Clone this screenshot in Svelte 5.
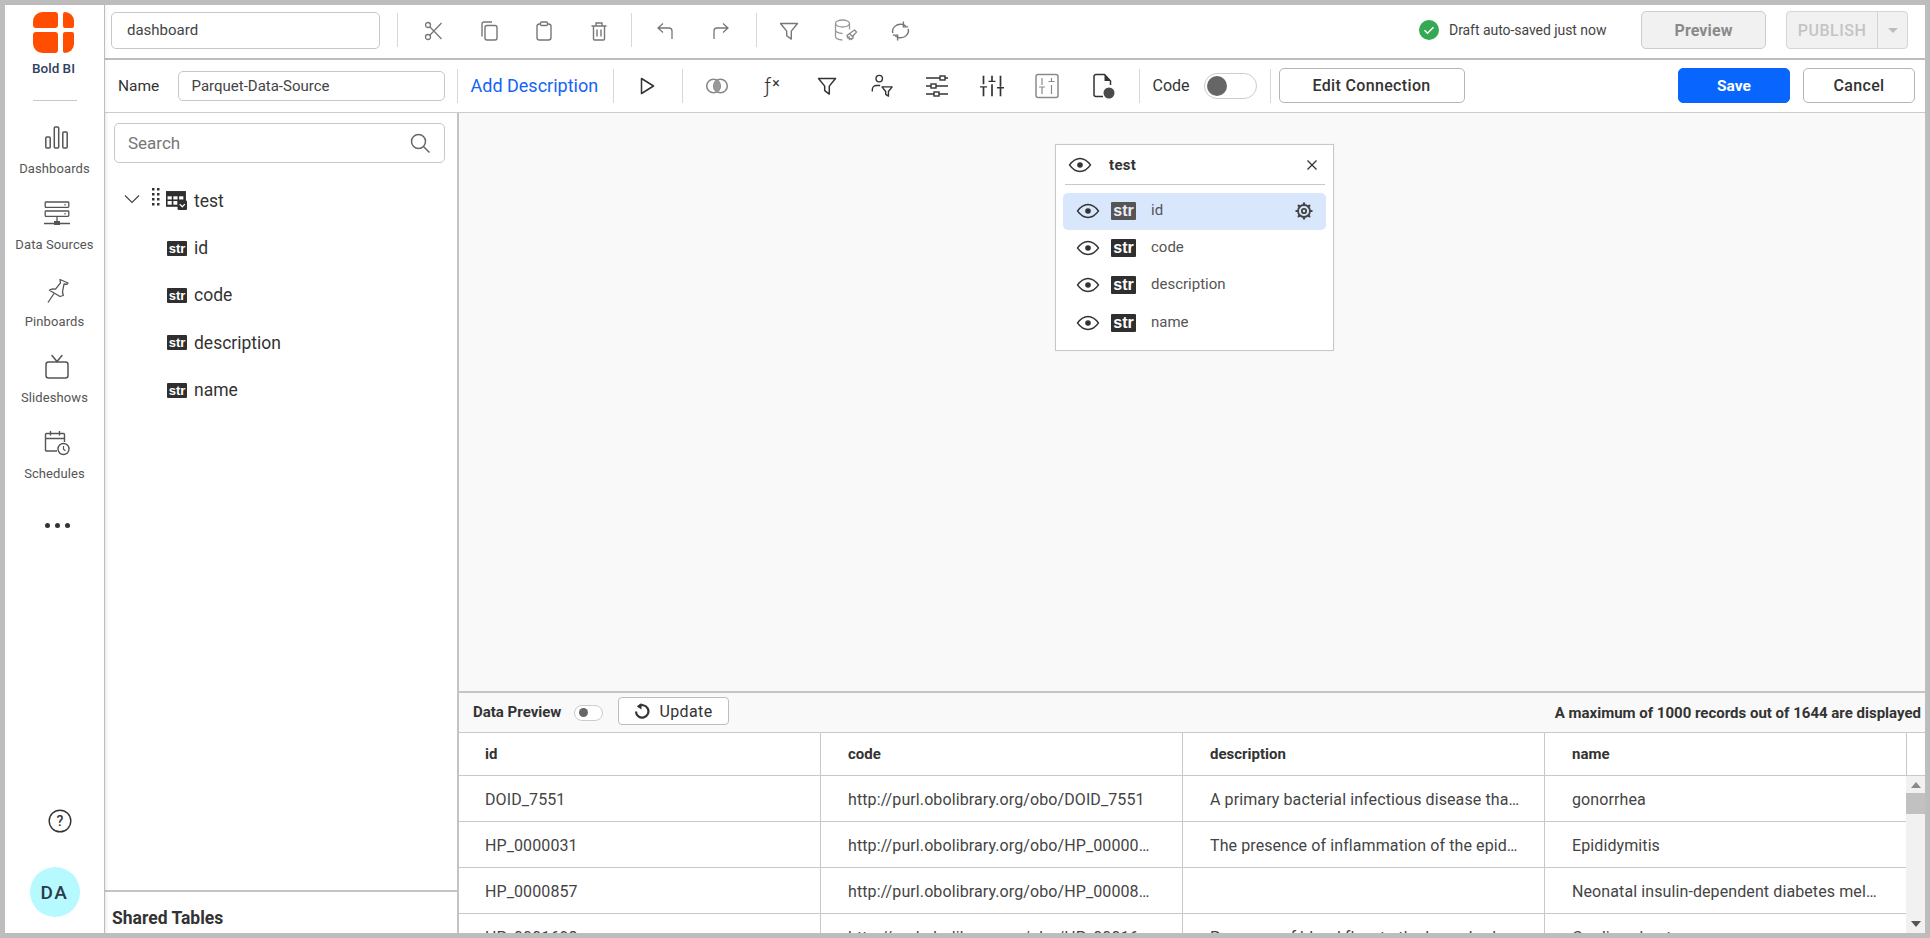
<script>
  const nav = [
    { label: 'Dashboards', icon: 'bars' },
    { label: 'Data Sources', icon: 'server' },
    { label: 'Pinboards', icon: 'pin' },
    { label: 'Slideshows', icon: 'tv' },
    { label: 'Schedules', icon: 'cal' }
  ];
  const fields = ['id', 'code', 'description', 'name'];
  const rows = [
    ['DOID_7551', 'http://purl.obolibrary.org/obo/DOID_7551', 'A primary bacterial infectious disease that is sexually transmitted', 'gonorrhea'],
    ['HP_0000031', 'http://purl.obolibrary.org/obo/HP_0000031', 'The presence of inflammation of the epididymis', 'Epididymitis'],
    ['HP_0000857', 'http://purl.obolibrary.org/obo/HP_0000857', '', 'Neonatal insulin-dependent diabetes mellitus'],
    ['HP_0001698', 'http://purl.obolibrary.org/obo/HP_0001698', 'Presence of blood flow to the lower body and organs', 'Cardiac shunt']
  ];
</script>

{#snippet eye()}
  <svg class="eye" width="24" height="16" viewBox="0 0 24 16"><path d="M1.5 8C5 3.3 8.3 1.5 12 1.5S19 3.3 22.5 8C19 12.7 15.7 14.5 12 14.5S5 12.7 1.5 8Z" fill="none" stroke="#333" stroke-width="1.3"/><circle cx="12" cy="8" r="2.8" fill="#333"/></svg>
{/snippet}

{#snippet filter(color, sw)}
  <svg width="22" height="22" viewBox="0 0 22 22"><path d="M2.5 3.5h17l-6.2 7.6v8l-4.6-3.4v-4.6z" fill="none" stroke={color} stroke-width={sw} stroke-linejoin="round"/></svg>
{/snippet}

<div class="page">
  <aside class="side">
    <div class="brand">
      <svg width="41" height="41" viewBox="0 0 41 41" fill="#ff4e02">
        <path d="M9.5 0H22a3 3 0 0 1 3 3v10a3 3 0 0 1-3 3H3a3 3 0 0 1-3-3V9.5A9.5 9.5 0 0 1 9.5 0Z"/>
        <path d="M32 0a9 9 0 0 1 9 9v5a2 2 0 0 1-2 2h-7a2 2 0 0 1-2-2V2a2 2 0 0 1 2-2Z"/>
        <path d="M3 20h19a3 3 0 0 1 3 3v15a3 3 0 0 1-3 3H9.5A9.5 9.5 0 0 1 0 31.5V23a3 3 0 0 1 3-3Z"/>
        <path d="M32 20h7a2 2 0 0 1 2 2v10a9 9 0 0 1-9 9 2 2 0 0 1-2-2V22a2 2 0 0 1 2-2Z"/>
      </svg>
      <span class="brand-name">Bold BI</span>
    </div>
    <div class="side-rule"></div>
    <nav class="nav">
      {#each nav as n}
        <div class="nav-item">
          <span class="nav-icon">
            {#if n.icon === 'bars'}
              <svg width="26" height="26" viewBox="0 0 26 26" fill="none" stroke="#555" stroke-width="1.5"><rect x="1.8" y="12" width="4.4" height="11" rx="1"/><rect x="10.3" y="2" width="4.4" height="21" rx="1"/><rect x="18.8" y="7" width="4.4" height="16" rx="1"/></svg>
            {:else if n.icon === 'server'}
              <svg width="26" height="26" viewBox="0 0 26 26" fill="none" stroke="#555" stroke-width="1.3"><rect x="1.2" y="1" width="23.6" height="5.4" rx=".8"/><rect x="1.2" y="10" width="23.6" height="5.4" rx=".8"/><path d="M13 15.5V21M0 22.5h26" /><rect x="10" y="20" width="6" height="4" fill="#555" stroke="none"/><circle cx="21" cy="3.7" r=".8" fill="#555" stroke="none"/><circle cx="21" cy="12.7" r=".8" fill="#555" stroke="none"/></svg>
            {:else if n.icon === 'pin'}
              <svg width="26" height="26" viewBox="0 0 26 26" fill="none" stroke="#555" stroke-width="1.3" stroke-linejoin="round"><path d="M16 1.5 24 5l-1.2 1.3-2.8-.3-1.5 8 .8 3.5L16 18.5 5.5 12.2 8 11l3.5.2 5-6.4z"/><path d="m10 15.5-6 9"/></svg>
            {:else if n.icon === 'tv'}
              <svg width="26" height="26" viewBox="0 0 26 26" fill="none" stroke="#555" stroke-width="1.5"><rect x="2" y="8" width="22" height="16" rx="2.5"/><path d="m8 1.5 5 6 5-6" stroke-linecap="round"/></svg>
            {:else}
              <svg width="26" height="26" viewBox="0 0 26 26" fill="none" stroke="#555" stroke-width="1.4"><path d="M13 21H2.5a1 1 0 0 1-1-1V4.5a1 1 0 0 1 1-1h17a1 1 0 0 1 1 1V12M1.5 8.5h19M6.5 1v4.5M15.5 1v4.5"/><circle cx="19.5" cy="19" r="5.5"/><path d="M19.5 16v3.2l2 1.5" stroke-width="1.2"/></svg>
            {/if}
          </span>
          <span class="nav-label">{n.label}</span>
        </div>
      {/each}
      <div class="more"><i></i><i></i><i></i></div>
    </nav>
    <div class="side-foot">
      <svg class="help" width="24" height="24" viewBox="0 0 24 24"><circle cx="12" cy="12" r="10.8" fill="none" stroke="#333" stroke-width="1.4"/><text x="12" y="17" text-anchor="middle" font-family="Roboto, sans-serif" font-size="14" font-weight="500" fill="#333">?</text></svg>
      <div class="avatar">DA</div>
    </div>
  </aside>

  <div class="main">
    <header class="topbar">
      <div class="fake-input dash">dashboard</div>
      <span class="sep s1"></span>
      <span class="tool t1"><svg width="20" height="20" viewBox="0 0 20 20" fill="none" stroke="#777" stroke-width="1.3"><circle cx="4" cy="4" r="2.5"/><circle cx="4" cy="16" r="2.5"/><path d="M5.8 5.8 17.5 18M5.8 14.2 17.5 2"/></svg></span>
      <span class="tool"><svg width="20" height="20" viewBox="0 0 20 20" fill="none" stroke="#777" stroke-width="1.4"><rect x="6" y="4.5" width="12" height="14.5" rx="2"/><path d="M3 15.5V3A2 2 0 0 1 5 1h8"/></svg></span>
      <span class="tool"><svg width="20" height="20" viewBox="0 0 20 20" fill="none" stroke="#777" stroke-width="1.4"><rect x="3" y="3" width="14" height="16" rx="2.5"/><rect x="6.5" y="1" width="7" height="3.5" rx="1" fill="#fff"/></svg></span>
      <span class="tool"><svg width="20" height="20" viewBox="0 0 20 20" fill="none" stroke="#777" stroke-width="1.4"><path d="M2.5 5h15M7 5V2h6v3M4.5 5v13a1 1 0 0 0 1 1h9a1 1 0 0 0 1-1V5M8 8.5v7M12 8.5v7"/></svg></span>
      <span class="sep s2"></span>
      <span class="tool t2"><svg width="22" height="22" viewBox="0 0 22 22" fill="none" stroke="#777" stroke-width="1.3"><path d="M8 3.5 3 8l5 4.5M3 8h11a3 3 0 0 1 3 3v8"/></svg></span>
      <span class="tool t3"><svg width="22" height="22" viewBox="0 0 22 22" fill="none" stroke="#777" stroke-width="1.3"><path d="M14 3.5 19 8l-5 4.5M19 8H8a3 3 0 0 0-3 3v8"/></svg></span>
      <span class="sep s3"></span>
      <span class="tool t4">{@render filter('#777', 1.4)}</span>
      <span class="tool t5"><svg width="26" height="26" viewBox="0 0 26 26" fill="none" stroke="#999" stroke-width="1.3"><ellipse cx="9.5" cy="5.5" rx="7" ry="3.5"/><path d="M2.5 5.5v13c0 1.8 3 3.5 7 3.5M16.5 5.5v6M2.5 12c0 1.8 3 3.5 7 3.5"/><path d="m21.5 12 2 2-4 4.5-3-3zM16.5 15.5l-2.5 2 1 2.5 1-1 .5 2.5 1.5-1 .5 1 1.5-1.5 0-3" stroke="#888"/></svg></span>
      <span class="tool"><svg width="25" height="22" viewBox="0 0 26 26" preserveAspectRatio="none" fill="none" stroke="#777" stroke-width="1.5"><path d="M5 15.5C3.5 9.5 9 3.8 15 5.3c1.500.4 2.800 1.200 3.700 2.300"/><path d="M16 1.800v6.400h5"/><path d="M21 10.500c1.500 6-4 11.700-10 10.200-1.500-.4-2.800-1.200-3.700-2.300"/><path d="M10 24.200v-6.400H5"/></svg></span>
      <div class="grow"></div>
      <svg class="ok" width="20" height="20" viewBox="0 0 20 20"><circle cx="10" cy="10" r="10" fill="#34a853"/><path d="m5.5 10.3 3 3 6-6" fill="none" stroke="#fff" stroke-width="1.5"/></svg>
      <span class="draft">Draft auto-saved just now</span>
      <div class="btn-preview">Preview</div>
      <div class="btn-publish"><span class="pub-text">PUBLISH</span><span class="pub-caret"><i></i></span></div>
    </header>

    <div class="toolbar">
      <span class="name-label">Name</span>
      <div class="fake-input ds">Parquet-Data-Source</div>
      <span class="sep2 a"></span>
      <span class="add">Add Description</span>
      <span class="sep2 b"></span>
      <span class="tb run"><svg width="22" height="22" viewBox="0 0 22 22"><path d="M5.5 3.5 17.5 11 5.5 18.5z" fill="none" stroke="#333" stroke-width="1.5" stroke-linejoin="round"/></svg></span>
      <span class="sep2 c"></span>
      <span class="tb join"><svg width="24" height="16" viewBox="0 0 24 16"><circle cx="8.5" cy="8" r="6.8" fill="none" stroke="#888" stroke-width="1.6"/><circle cx="15.5" cy="8" r="6.8" fill="none" stroke="#888" stroke-width="1.6"/><path d="M12 2.2a6.8 6.8 0 0 1 0 11.6 6.8 6.8 0 0 1 0-11.6z" fill="#999"/></svg></span>
      <span class="tb fx"><span class="fx-f">ƒ</span><span class="fx-x">×</span></span>
      <span class="tb">{@render filter('#333', 1.5)}</span>
      <span class="tb"><svg width="24" height="24" viewBox="0 0 26 26" fill="none" stroke="#333" stroke-width="1.5"><circle cx="10" cy="5" r="3.5"/><path d="M2.5 19v-2a4.5 4.5 0 0 1 4.5-4.5h4"/><path d="M13 14h11l-4 5v5l-3-2v-3z" stroke-linejoin="round"/></svg></span>
      <span class="tb"><svg width="26" height="24" viewBox="0 0 26 24" fill="none" stroke="#333" stroke-width="1.4"><path d="M2 4h14M21 4h3M2 12h5M12 12h12M2 20h8M15 20h9"/><rect x="16" y="2" width="5" height="4"/><rect x="7" y="10" width="5" height="4"/><rect x="10" y="18" width="5" height="4"/></svg></span>
      <span class="tb"><svg width="26" height="22" viewBox="0 0 26 26" preserveAspectRatio="none" fill="none" stroke="#333" stroke-width="1.7"><path d="M4.5 1v10M1 14h7M4.5 14v11M13 1v6M9.5 7.5h7M13 11v14M21.5 1v13M18 15h7M21.5 15v10"/></svg></span>
      <span class="tb"><svg width="24" height="26" viewBox="0 0 24 26" fill="none" stroke="#8a8a8a" stroke-width="1.5"><rect x="1" y="1.5" width="22" height="23" rx="2"/><path d="M7 5v7M4 14h6M7 14v7M16.5 5v3M13.5 8.5h6M16.5 12v9" stroke-width="1.2"/></svg></span>
      <span class="tb doc"><svg width="24" height="28" viewBox="0 0 24 28"><path d="M12 24.5H5a2 2 0 0 1-2-2v-18a2 2 0 0 1 2-2h8.5l6 6.5v4" fill="none" stroke="#333" stroke-width="1.5"/><path d="M13.5 2.5v6.5h6z" fill="#333"/><circle cx="18" cy="21" r="5.5" fill="#4a4a4a"/></svg></span>
      <span class="sep2 d"></span>
      <span class="code-label">Code</span>
      <span class="toggle big"><i></i></span>
      <span class="sep2 e"></span>
      <div class="btn edit">Edit Connection</div>
      <div class="grow"></div>
      <div class="btn save">Save</div>
      <div class="btn cancel">Cancel</div>
    </div>

    <div class="workspace">
      <section class="left">
        <div class="left-top">
          <div class="search">
            <span>Search</span>
            <svg width="22" height="22" viewBox="0 0 22 22" fill="none" stroke="#666" stroke-width="1.5"><circle cx="9.5" cy="9.5" r="7"/><path d="m14.7 14.7 5.8 5.8"/></svg>
          </div>
          <div class="tree">
            <div class="tree-row head">
              <svg class="chev" width="16" height="10" viewBox="0 0 16 10"><path d="M1 1.5 8 8.5l7-7" fill="none" stroke="#444" stroke-width="1.2"/></svg>
              <svg class="drag" width="8" height="18" viewBox="0 0 8 18" fill="#333"><rect x="0" y="0" width="2.5" height="2.5"/><rect x="5" y="0" width="2.5" height="2.5"/><rect x="0" y="5" width="2.5" height="2.5"/><rect x="5" y="5" width="2.5" height="2.5"/><rect x="0" y="10" width="2.5" height="2.5"/><rect x="5" y="10" width="2.5" height="2.5"/><rect x="0" y="15" width="2.5" height="2.5"/><rect x="5" y="15" width="2.5" height="2.5"/></svg>
              <svg class="tbl" width="21" height="19" viewBox="0 0 20 18"><rect width="19" height="15" fill="#2f2f2f"/><g fill="#fff"><rect x="1.5" y="5" width="4" height="3"/><rect x="7" y="5" width="4" height="3"/><rect x="12.5" y="5" width="4" height="3"/><rect x="1.5" y="9.5" width="4" height="3.5"/><rect x="7" y="9.5" width="4" height="3.5"/></g><rect x="11" y="9" width="9" height="9" rx="1" fill="#2f2f2f"/><path d="m13 12.5 2.5 2.5 2.5-2.5" fill="none" stroke="#fff" stroke-width="1.2"/></svg>
              <span>test</span>
            </div>
            {#each fields as f}
              <div class="tree-row leaf"><span class="str small">str</span><span>{f}</span></div>
            {/each}
          </div>
        </div>
        <div class="shared">Shared Tables</div>
      </section>

      <section class="right">
        <div class="canvas">
          <div class="card">
            <div class="card-head">
              {@render eye()}
              <span class="card-title">test</span>
              <svg width="12" height="12" viewBox="0 0 12 12"><path d="m1.5 1.5 9 9m0-9-9 9" stroke="#333" stroke-width="1.3"/></svg>
            </div>
            <div class="card-rows">
              {#each fields as f, i}
                <div class="card-row" class:sel={i === 0}>
                  {@render eye()}
                  <span class="str big">str</span>
                  <span class="card-name">{f}</span>
                  {#if i === 0}
                    <svg class="gear" width="20" height="20" viewBox="0 0 20 20" fill="none" stroke="#444"><circle cx="10" cy="10" r="6" stroke-width="1.8"/><circle cx="10" cy="10" r="2.2" stroke-width="1.8"/><path d="M10 1.5v2.5M10 16v2.5M1.5 10H4M16 10h2.5M4 4l1.8 1.8M14.2 14.2 16 16M16 4l-1.8 1.8M5.8 14.2 4 16" stroke-width="2.2"/></svg>
                  {/if}
                </div>
              {/each}
            </div>
          </div>
        </div>

        <div class="preview-bar">
          <span class="dp">Data Preview</span>
          <span class="toggle small"><i></i></span>
          <div class="update">
            <svg width="16" height="18" viewBox="0 0 16 18"><path d="M4 4.8a6.2 6.2 0 1 1-2 4.6" fill="none" stroke="#333" stroke-width="2.2"/><path d="M7.5 1v6.5L3 4.5z" fill="#333"/></svg>
            <span>Update</span>
          </div>
          <div class="grow"></div>
          <span class="maxrec">A maximum of 1000 records out of 1644 are displayed</span>
        </div>

        <div class="grid-wrap">
          <div class="g-head">
            {#each fields as f}<div class="cell hd">{f}</div>{/each}
            <div class="blank"></div>
          </div>
          <div class="g-body">
            <div class="g-rows">
              {#each rows as r}
                <div class="g-row">
                  {#each r as c}<div class="cell"><span>{c}</span></div>{/each}
                </div>
              {/each}
            </div>
            <div class="scroll">
              <i class="up"></i>
              <b></b>
              <div class="grow"></div>
              <i class="down"></i>
            </div>
          </div>
        </div>
      </section>
    </div>
  </div>
</div>

<style>
  :global(body) { margin: 0; }
  .page {
    box-sizing: border-box; width: 1930px; height: 938px; padding: 5px;
    background: #bdbdbd; display: flex; overflow: hidden;
    font-family: Roboto, "Liberation Sans", sans-serif; color: #333;
  }
  .grow { flex: 1; }

  .side {
    width: 100px; flex: none; background: #fff; border-right: 1px solid #bdbdbd; box-sizing: border-box;
    display: flex; flex-direction: column; align-items: center; position: relative;
    box-shadow: 2px 0 3px rgba(0,0,0,.04);
  }
  .brand { display: flex; flex-direction: column; align-items: center; padding-top: 7px; width: 100%; }
  .brand svg { margin-left: -2px; }
  .brand-name { font-size: 13.5px; font-weight: 500; color: #2d3f63; margin: 7px 0 0 -2px; line-height: 16px; }
  .side-rule { width: 44px; height: 1px; background: #c8c8c8; margin-top: 24px; }
  .nav { display: flex; flex-direction: column; align-items: center; width: 100%; margin-top: 24px; flex: 1; }
  .nav-item { display: flex; flex-direction: column; align-items: center; height: 76.3px; box-sizing: border-box; flex: none; }
  .nav-icon { height: 26px; width: 26px; display: block; margin-left: 4px; }
  .nav-icon svg { display: block; }
  .nav-label { font-size: 13px; color: #555; line-height: 16px; margin-top: 10px; letter-spacing: .1px; }
  .more { display: flex; gap: 5px; margin: 17px 0 0 6px; }
  .more i { width: 5px; height: 5px; border-radius: 50%; background: #333; display: block; }
  .side-foot { display: flex; flex-direction: column; align-items: center; padding-bottom: 16px; }
  .help { display: block; margin: 0 0 34px 10px; }
  .avatar {
    width: 50px; height: 50px; border-radius: 50%; background: #b6f9ff; color: #2c3a4b;
    display: flex; align-items: center; justify-content: center;
    font-size: 19px; font-weight: 500; letter-spacing: 1.5px;
  }

  .main { flex: 1; min-width: 0; display: flex; flex-direction: column; background: #fff; }
  .topbar {
    height: 55px; flex: none; box-sizing: border-box; border-bottom: 2px solid #bdbdbd;
    display: flex; align-items: center; padding: 0 17px 3px 6px;
  }
  .fake-input {
    box-sizing: border-box; border: 1px solid #c8c8c8; border-radius: 5px; background: #fff;
    display: flex; align-items: center; color: #444; flex: none;
  }
  .dash { width: 269px; height: 37px; padding-left: 15px; font-size: 15px; }
  .sep { width: 1px; height: 34px; background: #d8d8d8; flex: none; }
  .s1 { margin-left: 17px; }
  .tool { width: 55px; height: 28px; display: flex; align-items: center; justify-content: center; flex: none; margin-top: 2px; }
  .t1 { margin-left: 8px; }
  .s2 { margin-left: 5px; }
  .t2 { margin-left: 6px; }
  .t3 { margin-left: -1px; }
  .s3 { margin-left: 9px; }
  .t4 { margin-left: 4px; }
  .t5 { margin-left: 2px; }
  .ok { flex: none; }
  .draft { font-size: 14px; color: #444; margin: 0 0 0 10px; width: 192px; white-space: nowrap; letter-spacing: -.05px; }
  .btn-preview {
    width: 125px; height: 38px; box-sizing: border-box; background: #f1f1f1; border: 1px solid #ccc; border-radius: 5px;
    display: flex; align-items: center; justify-content: center; font-size: 16px; font-weight: 700; color: #8a8a8a; flex: none; letter-spacing: .1px;
  }
  .btn-publish {
    width: 122px; height: 38px; margin-left: 20px; box-sizing: border-box; background: #f1f1f1; border: 1px solid #d5d5d5; border-radius: 4px;
    display: flex; flex: none; color: #c4c4c4; font-size: 16px; font-weight: 500; letter-spacing: .5px;
  }
  .pub-text { width: 90px; display: flex; align-items: center; justify-content: center; border-right: 1px solid #d5d5d5; }
  .pub-caret { flex: 1; display: flex; align-items: center; justify-content: center; }
  .pub-caret i { border: 5px solid transparent; border-top: 5px solid #bdbdbd; border-bottom: 0; display: block; }

  .toolbar {
    height: 53px; flex: none; box-sizing: border-box; border-bottom: 1px solid #ccc;
    display: flex; align-items: center; padding: 0 10px 1px 13px;
  }
  .name-label { font-size: 15.5px; color: #333; width: 59.5px; flex: none; }
  .ds { width: 267px; height: 30px; padding-left: 13px; font-size: 15px; margin-top: 1px; }
  .sep2 { width: 1px; height: 34px; background: #d8d8d8; flex: none; }
  .sep2.a { margin-left: 12px; }
  .add { color: #1464f6; font-size: 18px; margin-left: 13px; width: 128px; white-space: nowrap; flex: none; }
  .sep2.b { margin-left: 14px; }
  .tb { width: 55px; height: 32px; display: flex; align-items: center; justify-content: center; flex: none; }
  .run { margin-left: 6px; width: 55px; }
  .sep2.c { margin-left: 7px; }
  .join { margin-left: 7px; }
  .fx { gap: 1px; color: #333; align-items: flex-start; padding-top: 3px; box-sizing: border-box; height: 32px; }
  .fx-f { font-size: 21px; font-weight: 300; line-height: 26px; }
  .fx-x { font-size: 14px; line-height: 20px; }
  .doc { margin-left: 1px; }
  .sep2.d { margin-left: 8px; }
  .code-label { font-size: 16px; color: #333; margin-left: 13px; width: 37px; flex: none; }
  .toggle { position: relative; display: block; box-sizing: border-box; background: #fff; border: 1px solid #ccc; border-radius: 14px; flex: none; }
  .toggle i { position: absolute; border-radius: 50%; background: #666; display: block; }
  .toggle.big { width: 53px; height: 26px; margin-left: 14px; }
  .toggle.big i { width: 20px; height: 20px; left: 2px; top: 2px; }
  .toggle.small { width: 29px; height: 16px; margin-left: 13px; }
  .toggle.small i { width: 9px; height: 9px; left: 4px; top: 2.5px; }
  .sep2.e { margin-left: 13px; }
  .btn {
    height: 35px; box-sizing: border-box; border-radius: 5px; border: 1px solid #b5b5b5; background: #fff;
    display: flex; align-items: center; justify-content: center; font-size: 16px; font-weight: 500; color: #333; flex: none;
  }
  .edit { width: 186px; margin-left: 8px; letter-spacing: .35px; }
  .save { width: 112px; background: #0866ff; border-color: #0866ff; color: #fff; font-weight: 700; font-size: 15.5px; }
  .cancel { width: 112px; margin-left: 13px; letter-spacing: .3px; }

  .workspace { flex: 1; min-height: 0; display: flex; }
  .left {
    width: 354px; flex: none; box-sizing: border-box; border-right: 2px solid #c4c4c4;
    display: flex; flex-direction: column; box-shadow: inset 3px 0 3px -2px rgba(0,0,0,.06);
  }
  .left-top { flex: 1; min-height: 0; }
  .search {
    box-sizing: border-box; margin: 10px 0 0 9px; width: 331px; height: 40px; border: 1px solid #c8c8c8; border-radius: 5px;
    display: flex; align-items: center; justify-content: space-between; padding: 0 13px 0 13px; font-size: 17px; color: #777;
  }
  .tree { padding-top: 14px; }
  .tree-row { height: 47.3px; display: flex; align-items: center; font-size: 17.5px; color: #333; box-sizing: border-box; }
  .tree-row.head { padding-left: 19px; height: 47.5px; }
  .chev { margin-right: 12px; margin-top: -4px; }
  .drag { margin-right: 6px; margin-top: -8px; }
  .tbl { margin-right: 7px; margin-top: -1px; }
  .tree-row.leaf { padding-left: 62px; }
  .str {
    background: #2f2f2f; color: #fff; font-family: "Liberation Sans", sans-serif; font-weight: 700;
    display: flex; align-items: center; justify-content: center; flex: none; border-radius: 1px;
  }
  .str.small { width: 20px; height: 15px; font-size: 13px; margin-right: 7px; line-height: 15px; }
  .str.big { width: 25px; height: 18px; font-size: 16px; line-height: 18px; }
  .shared {
    height: 43px; flex: none; box-sizing: border-box; border-top: 2px solid #c4c4c4;
    display: flex; align-items: center; padding: 10px 0 0 7px; font-size: 17.5px; font-weight: 700; color: #333;
  }

  .right { flex: 1; min-width: 0; display: flex; flex-direction: column; }
  .canvas { flex: 1; min-height: 0; background: #f9f9f9; border-bottom: 2px solid #c4c4c4; position: relative; }
  .card {
    position: absolute; left: 596px; top: 31px; width: 279px; height: 207px; box-sizing: border-box;
    background: #fff; border: 1px solid #c8c8c8; box-shadow: 0 0 2px rgba(0,0,0,.05);
    padding: 0 7px;
  }
  .card-head {
    height: 39px; display: flex; align-items: center; margin: 0 1px 0 2px; border-bottom: 1px solid #c8c8c8;
    padding: 0 7px 0 3px;
  }
  .card-title { flex: 1; font-size: 15px; font-weight: 700; margin-left: 17px; letter-spacing: .3px; color: #333; }
  .card-rows { padding-top: 8px; }
  .card-row { height: 37.3px; box-sizing: border-box; padding: 0 0 1.5px 13px; display: flex; align-items: center; border-radius: 5px; position: relative; }
  .card-row.sel { background: #d9e7fd; }
  .card-row.sel .str { background: #555; color: #e8eef8; }
  .card-row .str { margin-left: 11px; }
  .card-name { font-size: 15px; color: #555; margin-left: 15px; flex: 1; margin-top: -2px; }
  .gear { margin-right: 12px; }

  .preview-bar {
    height: 40px; flex: none; box-sizing: border-box; background: #f9f9f9; border-bottom: 1px solid #c8c8c8;
    display: flex; align-items: center; padding: 0 4px 0 14px;
  }
  .dp { font-size: 15px; font-weight: 700; color: #333; width: 88px; white-space: nowrap; flex: none; margin-top: -1px; }
  .update {
    box-sizing: border-box; width: 111px; height: 28px; margin-left: 15px; border: 1px solid #bdbdbd; border-radius: 4px; background: #fff;
    display: flex; align-items: center; justify-content: center; gap: 9px; font-size: 16px; color: #333; letter-spacing: .4px; flex: none; margin-top: -3px;
  }
  .maxrec { font-size: 15px; font-weight: 700; color: #333; white-space: nowrap; }

  .grid-wrap { flex: none; height: 200px; overflow: hidden; background: #fff; }
  .g-head { display: flex; height: 43px; box-sizing: border-box; border-bottom: 1px solid #c8c8c8; }
  .g-head .blank { flex: 1; }
  .cell {
    width: 362px; flex: none; box-sizing: border-box; border-right: 1px solid #c8c8c8; padding: 1px 29px 0 27px;
    display: flex; align-items: center; font-size: 16px; color: #444; min-width: 0; letter-spacing: .1px;
  }
  .cell:first-child { padding-left: 26px; }
  .cell:nth-child(3) { padding-right: 24px; }
  .cell span { overflow: hidden; white-space: nowrap; text-overflow: ellipsis; min-width: 0; }
  .cell.hd { font-size: 15px; font-weight: 700; color: #333; padding-top: 0; letter-spacing: 0; }
  .g-body { display: flex; height: 157px; }
  .g-rows { width: 1447px; flex: none; overflow: hidden; }
  .g-row { display: flex; height: 46px; box-sizing: border-box; border-bottom: 1px solid #c8c8c8; }
  .g-row .cell:last-child { border-right: 0; }
  .scroll { flex: 1; background: #f1f1f1; display: flex; flex-direction: column; align-items: center; }
  .scroll b { display: block; width: 100%; height: 21px; background: #c1c1c1; margin-top: 5px; }
  .scroll i { display: block; border: 5px solid transparent; }
  .scroll .up { border-top: 0; border-bottom: 6px solid #8a8a8a; margin-top: 6px; }
  .scroll .down { border-bottom: 0; border-top: 6px solid #555; margin-bottom: 6px; }
</style>
